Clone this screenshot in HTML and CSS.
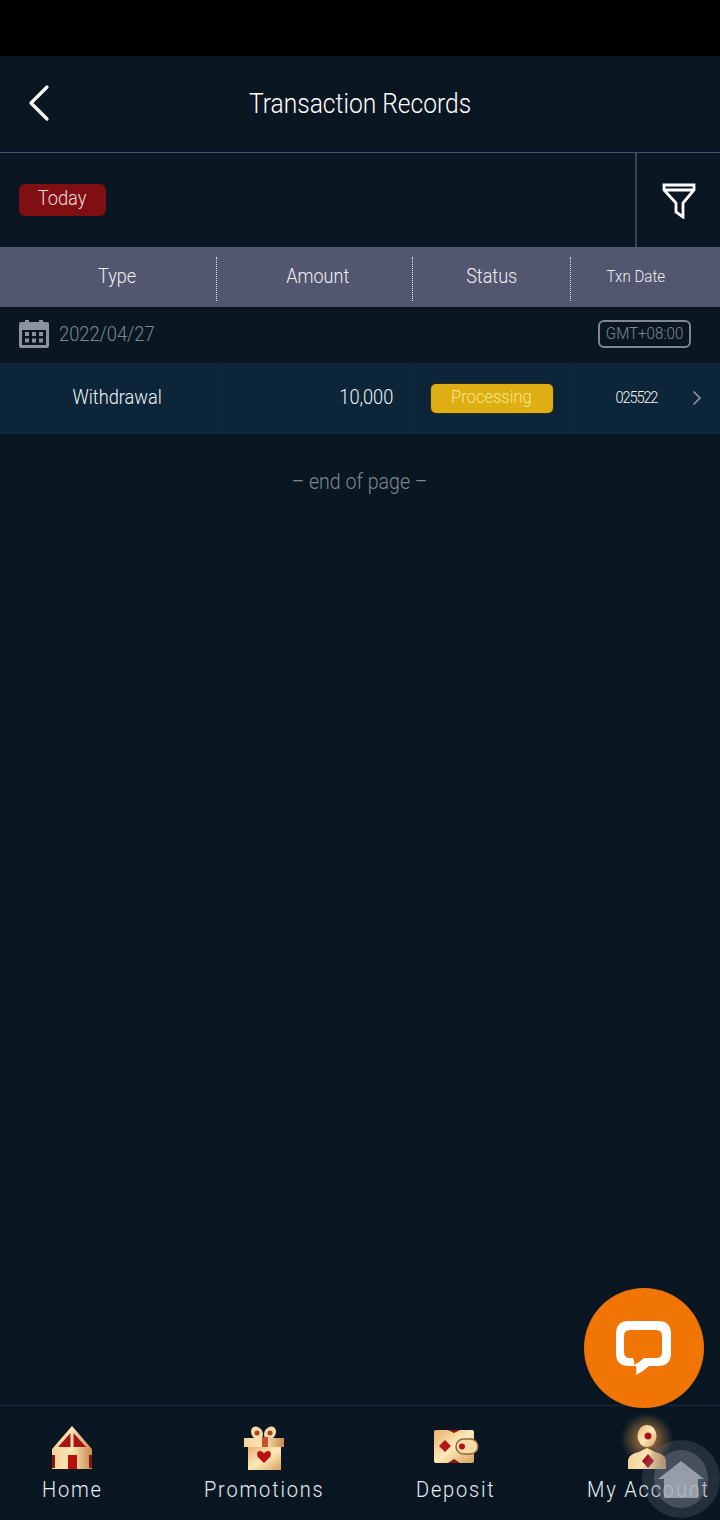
FILE: index.html
```html
<!DOCTYPE html>
<html lang="en">
<head>
  <meta charset="UTF-8" />
  <title>Transaction Records</title>
  <link rel="stylesheet" href="styles.css">
</head>
<body>
  <svg class="defs" width="0" height="0">
    <defs>
      <linearGradient id="gold" x1="0" y1="0" x2="1" y2="0">
        <stop offset="0" stop-color="#f6d49a"/>
        <stop offset="0.5" stop-color="#fbe6b4"/>
        <stop offset="1" stop-color="#c58a4e"/>
      </linearGradient>
      <linearGradient id="goldDiag" x1="0" y1="0" x2="1" y2="1">
        <stop offset="0" stop-color="#e9b070"/>
        <stop offset="0.5" stop-color="#fdeab8"/>
        <stop offset="1" stop-color="#d9a060"/>
      </linearGradient>
      <radialGradient id="glow">
        <stop offset="0" stop-color="#e8a050" stop-opacity="0.8"/>
        <stop offset="1" stop-color="#e8a050" stop-opacity="0"/>
      </radialGradient>
    </defs>
  </svg>

  <div class="page">
    <div class="status-bar"></div>

    <header class="title-bar">
      <svg class="back-icon" width="24" height="38" viewBox="0 0 24 38">
        <path d="M20 3 L4 19 L20 35" fill="none" stroke="#fff" stroke-width="3.200" stroke-linecap="round" stroke-linejoin="round"/>
      </svg>
      <h1 class="title-text">Transaction Records</h1>
    </header>

    <div class="filter-bar">
      <div class="filter-tags"><div class="tag-today"><span>Today</span></div></div>
      <div class="filter-btn">
        <svg width="34" height="36" viewBox="0 0 34 36">
          <path d="M2 2 H32 V7 L21 20 V34 L14 29 V20 L2 7 Z M2 7 H32" fill="none" stroke="#fff" stroke-width="2.800"/>
        </svg>
      </div>
    </div>

    <div class="table-head">
      <div class="col col-type"><span>Type</span></div>
      <div class="col col-amount"><span>Amount</span></div>
      <div class="col col-status"><span>Status</span></div>
      <div class="col col-date small"><span>Txn Date</span></div>
    </div>

    <div class="date-row">
      <svg width="32" height="30" viewBox="0 0 32 30">
        <path fill="#8b929c" fill-rule="evenodd" d="M3 3 H7 V1 H11 V3 H21 V1 H25 V3 H29 Q31 3 31 5 V27 Q31 29 29 29 H3 Q1 29 1 27 V5 Q1 3 3 3 Z M4 11 V26 H28 V11 Z"/>
        <g fill="#8b929c">
          <rect x="7" y="13" width="4" height="4"/><rect x="14" y="13" width="4" height="4"/><rect x="21" y="13" width="4" height="4"/>
          <rect x="7" y="19.500" width="4" height="4"/><rect x="14" y="19.500" width="4" height="4"/><rect x="21" y="19.500" width="4" height="4"/>
        </g>
      </svg>
      <div class="date-text"><span>2022/04/27</span></div>
      <div class="zone"><span>GMT+08:00</span></div>
    </div>

    <div class="record-row">
      <div class="col col-type"><span>Withdrawal</span></div>
      <div class="col col-amount amount"><span>10,000</span></div>
      <div class="col col-status"><div class="status-pill"><span>Processing</span></div></div>
      <div class="col col-date time"><span>025522</span>
        <svg class="row-arrow" width="10" height="16" viewBox="0 0 10 16">
          <path d="M1.500 1.500 L8 8 L1.500 14.500" fill="none" stroke="#8f9aa8" stroke-width="1.500"/>
        </svg>
      </div>
    </div>

    <p class="end-page"><span>– end of page –</span></p>

    <nav class="bottom-nav">
      <div class="nav-item">
        <svg width="44" height="46" viewBox="0 0 44 46">
          <path d="M22 1 L42 24 V44 H2 V24 Z" fill="url(#gold)"/>
          <path d="M20.500 8 V22 H8 Z" fill="#a81414"/>
          <path d="M23.500 8 V22 H36 Z" fill="#a81414"/>
          <rect x="18" y="30" width="9" height="14" fill="#b80f0f"/>
          <rect x="2" y="30" width="3" height="13" fill="#8e1410"/>
          <rect x="39" y="30" width="3" height="13" fill="#8e1410"/>
        </svg>
        <span>Home</span>
      </div>
      <div class="nav-item">
        <svg width="44" height="46" viewBox="0 0 44 46">
          <ellipse cx="15" cy="8" rx="5.500" ry="7" fill="#f6d8a8" transform="rotate(-35 15 8)"/>
          <ellipse cx="28" cy="8" rx="5.500" ry="7" fill="#f6d8a8" transform="rotate(35 28 8)"/>
          <circle cx="15" cy="8" r="2.500" fill="#a8461c"/>
          <circle cx="28" cy="8" r="2.500" fill="#a8461c"/>
          <rect x="2" y="13" width="40" height="9" fill="url(#gold)"/>
          <rect x="6" y="22" width="33" height="23" fill="url(#goldDiag)"/>
          <rect x="20" y="12" width="6" height="10" fill="#c8502c"/>
          <path d="M22 38 L15.500 31.500 Q14 26 18 26 Q21 26 22 28.500 Q23 26 26 26 Q30 26 28.500 31.500 Z" fill="#b80f14"/>
        </svg>
        <span>Promotions</span>
      </div>
      <div class="nav-item">
        <svg width="46" height="46" viewBox="0 0 46 46">
          <rect x="1" y="5" width="40" height="33" rx="2" fill="url(#goldDiag)"/>
          <path d="M15 5 H27 L21 8 Z M15 38 H27 L21 34 Z" fill="#8e1410"/>
          <path d="M6 21 L12 15 L18 21 L12 27 Z" fill="#b01414"/>
          <rect x="23" y="14" width="22" height="15" rx="7.500" fill="#f6dca6" stroke="#8a6a40" stroke-width="1.500"/>
          <circle cx="29" cy="21.500" r="3" fill="#b01414"/>
        </svg>
        <span>Deposit</span>
      </div>
      <div class="nav-item">
        <svg width="44" height="46" viewBox="0 0 44 46" class="nav-active-icon">
          <circle cx="21" cy="14" r="26" fill="url(#glow)"/>
          <ellipse cx="21" cy="11" rx="9.500" ry="11" fill="url(#goldDiag)"/>
          <circle cx="22" cy="11" r="3.500" fill="#a81420"/>
          <path d="M2 44 V35 Q3 29 13 27 L21 23 L29 27 Q39 29 40 35 V44 Z" fill="url(#gold)"/>
          <path d="M22 29 L28 36 L22 43 L16 36 Z" fill="#a81420"/>
        </svg>
        <span>My Account</span>
      </div>
    </nav>

    <div class="chat-btn">
      <svg width="56" height="55" viewBox="0 0 56 55">
        <path fill="#fff" fill-rule="evenodd" d="M13 0 H42 Q55 0 55 13 V32 Q55 45 42 45 H33 Q28 50 20 54 Q21 49 20 45 H13 Q0 45 0 32 V13 Q0 0 13 0 Z M14 9 Q8 9 8 15 V31 Q8 37 14 37 H17 Q19 41 18 44 Q24 41 28 37 H40 Q46 37 46 31 V15 Q46 9 40 9 Z"/>
      </svg>
    </div>

    <div class="scroll-top">
      <div class="scroll-top-inner">
        <svg width="48" height="37" viewBox="0 0 48 37">
          <path d="M24 0 L47 18 H41 V37 H7 V18 H1 Z" fill="#aab0bb" fill-opacity="0.8"/>
        </svg>
      </div>
    </div>
  </div>
</body>
</html>
```

FILE: styles.css
```css
/* Basic Reset */
* {
  margin: 0;
  padding: 0;
  box-sizing: border-box;
}

body {
  font-family: Roboto, "Liberation Sans", sans-serif;
  font-weight: 300;
  background-color: #0a1723;
  color: #fff;
}

span,
.title-text {
  display: inline-block;
  white-space: nowrap;
}

.defs {
  display: block;
  height: 0;
}

.page {
  width: 720px;
  height: 1520px;
  position: relative;
  overflow: hidden;
  display: flex;
  flex-direction: column;
  background-color: #0a1723;
}

.status-bar {
  height: 56px;
  background-color: #000;
}

.title-bar {
  height: 97px;
  display: flex;
  align-items: center;
  justify-content: center;
  position: relative;
  border-bottom: 1px solid #2b5880;
}

.title-text {
  font-size: 27px;
  font-weight: 300;
  transform: scaleX(0.91);
}

.back-icon {
  position: absolute;
  left: 27px;
  top: 28px;
}

.filter-bar {
  height: 94px;
  display: flex;
}

.filter-tags {
  flex: 1;
  display: flex;
  align-items: center;
  padding-left: 19px;
}

.tag-today {
  width: 87px;
  height: 32px;
  border-radius: 6px;
  background-color: #7f0f12;
  color: #f3dcdc;
  font-size: 21px;
  text-align: center;
  line-height: 28px;
}

.tag-today span {
  transform: scaleX(0.87);
}

.filter-btn {
  width: 85px;
  border-left: 2px solid #39424f;
  display: flex;
  align-items: center;
  justify-content: center;
  padding-top: 1px;
}

.table-head {
  height: 60px;
  display: flex;
  align-items: center;
  background-color: #52566f;
  font-size: 21px;
  color: #eef0f5;
}

.table-head span {
  transform: scaleX(0.86);
}

.col {
  text-align: center;
  height: 100%;
  display: flex;
  align-items: center;
  justify-content: center;
}

.col-type {
  width: 217px;
  padding-left: 18px;
}

.col-amount {
  width: 196px;
  padding-left: 7px;
}

.col-status {
  width: 158px;
}

.col-date {
  flex: 1;
  padding-right: 19px;
}

.table-head .col {
  height: 44px;
  margin-top: 4px;
  padding-bottom: 6px;
  border-right: 1px dotted #e8eaf0;
}

.table-head .col-date {
  border-right: none;
}

.table-head .small {
  font-size: 17px;
}

.table-head .small span {
  transform: scaleX(0.89);
}

.date-row {
  height: 56px;
  display: flex;
  align-items: center;
  padding: 0 29px 2px 18px;
  color: #7f8792;
  font-size: 21px;
}

.date-text {
  flex: 1;
  margin-left: 9px;
}

.date-text span {
  transform: scaleX(0.87);
  transform-origin: left center;
}

.zone {
  width: 93px;
  height: 28px;
  border: 2px solid #7f8792;
  border-radius: 6px;
  font-size: 17px;
  line-height: 22px;
  text-align: center;
}

.zone span {
  transform: scaleX(0.89);
}

.record-row {
  height: 71px;
  display: flex;
  background-color: #0c2539;
  border-bottom: 1px solid #0f2c44;
  font-size: 20px;
  color: #f2f5f8;
}

.record-row span {
  transform: scaleX(0.91);
}

.record-row .col {
  border-right: 1px solid #12293e;
  height: 64px;
  margin-top: 2px;
}

.record-row .col-date {
  border-right: none;
  position: relative;
}

.amount.col {
  justify-content: flex-end;
  padding-right: 19px;
}

.record-row .amount span {
  transform-origin: right center;
}

.status-pill {
  width: 122px;
  height: 29px;
  margin-top: 3px;
  border-radius: 5px;
  background-color: #dfae12;
  color: #f5e88a;
  font-size: 19px;
  line-height: 26px;
  box-shadow: 0 0 2px 1px #2e2a14;
}

.record-row .status-pill span {
  transform: scaleX(0.87);
}

.time {
  font-size: 17px;
  letter-spacing: -1.3px;
}

.record-row .time span {
  transform: scaleX(0.86);
}

.row-arrow {
  position: absolute;
  right: 18px;
  top: 25px;
}

.end-page {
  text-align: center;
  color: #7d8690;
  font-size: 22px;
  margin-top: 35px;
}

.end-page span {
  transform: scaleX(0.89);
}

.bottom-nav {
  position: absolute;
  left: 0;
  right: 0;
  bottom: 0;
  height: 115px;
  display: flex;
  margin-left: -24px;
  border-top: 1px solid #152a3c;
  background-color: #0a1723;
}

.nav-item {
  width: 192px;
  flex: none;
  display: flex;
  flex-direction: column;
  align-items: center;
  padding-top: 19px;
  font-size: 22px;
  letter-spacing: 2px;
  color: #e9eef3;
}

.nav-item svg {
  flex: none;
  overflow: visible;
}

.nav-item span {
  margin-top: 6px;
  transform: scaleX(0.91);
}

.chat-btn {
  position: absolute;
  left: 584px;
  top: 1288px;
  width: 120px;
  height: 120px;
  border-radius: 50%;
  background-color: #f07505;
  display: flex;
  align-items: center;
  justify-content: center;
}

.scroll-top {
  position: absolute;
  left: 642px;
  top: 1440px;
  width: 78px;
  height: 78px;
  border-radius: 50%;
  background-color: rgba(130, 138, 150, 0.22);
  display: flex;
  align-items: center;
  justify-content: center;
}

.scroll-top-inner {
  width: 54px;
  height: 58px;
  border-radius: 50%;
  background-color: rgba(150, 156, 170, 0.3);
  display: flex;
  align-items: center;
  justify-content: center;
}
```
